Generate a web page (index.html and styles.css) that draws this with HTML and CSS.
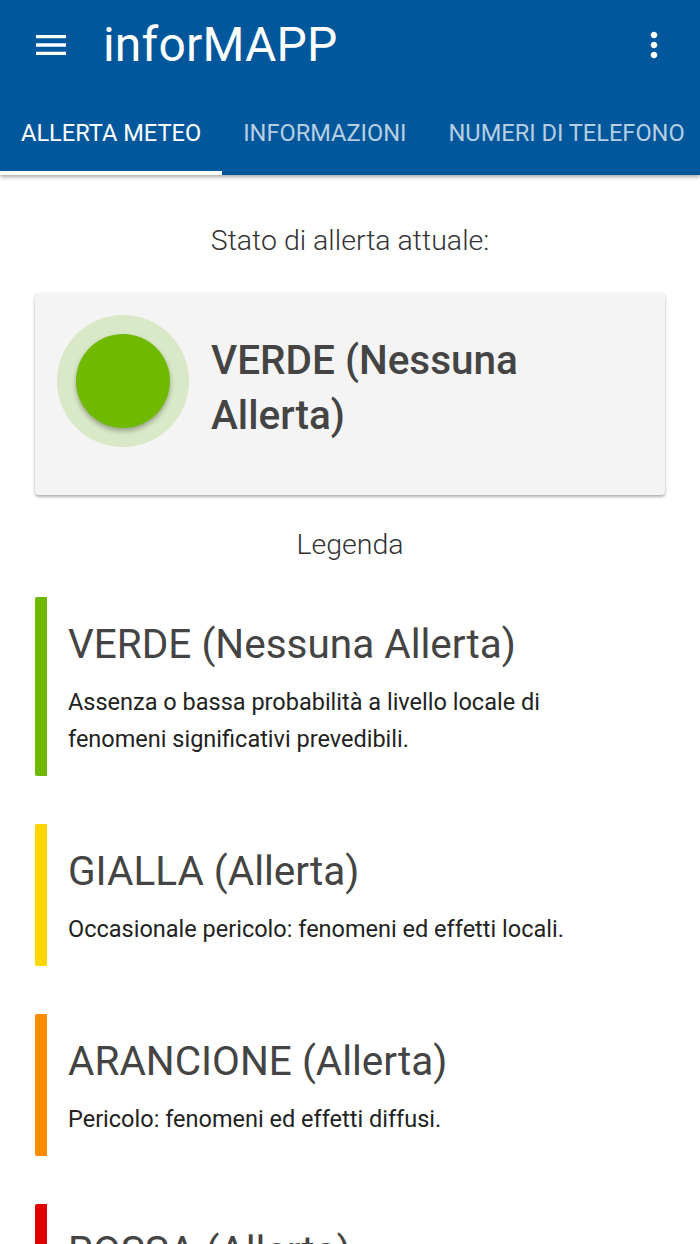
FILE: index.html
```html
<!DOCTYPE html>
<html lang="it">
<head>
<meta charset="utf-8">
<title>inforMAPP</title>
<link rel="stylesheet" href="styles.css">
</head>
<body>
<header class="appbar">
  <div class="toolbar">
    <svg class="icon menu" viewBox="0 0 24 24" width="40" height="40"><path fill="#fff" d="M3 18h18v-2H3v2zm0-5h18v-2H3v2zm0-7v2h18V6H3z"/></svg>
    <div class="title">inforMAPP</div>
    <svg class="icon more" viewBox="0 0 24 24" width="40" height="40"><path fill="#fff" d="M12 8c1.1 0 2-.9 2-2s-.9-2-2-2-2 .9-2 2 .9 2 2 2zm0 2c-1.1 0-2 .9-2 2s.9 2 2 2 2-.9 2-2-.9-2-2-2zm0 6c-1.1 0-2 .9-2 2s.9 2 2 2 2-.9 2-2-.9-2-2-2z"/></svg>
  </div>
  <nav class="tabs">
    <div class="tab active">ALLERTA METEO</div>
    <div class="tab">INFORMAZIONI</div>
    <div class="tab">NUMERI DI TELEFONO</div>
  </nav>
</header>
<main class="content">
  <p class="caption">Stato di allerta attuale:</p>
  <section class="card">
    <div class="halo"><div class="dot"></div></div>
    <div class="status">VERDE (Nessuna Allerta)</div>
  </section>
  <p class="caption legend-title">Legenda</p>
  <div class="legend">
    <div class="item green">
      <div class="item-title">VERDE (Nessuna Allerta)</div>
      <div class="item-desc">Assenza o bassa probabilità a livello locale di fenomeni significativi prevedibili.</div>
    </div>
    <div class="item yellow">
      <div class="item-title">GIALLA (Allerta)</div>
      <div class="item-desc">Occasionale pericolo: fenomeni ed effetti locali.</div>
    </div>
    <div class="item orange">
      <div class="item-title">ARANCIONE (Allerta)</div>
      <div class="item-desc">Pericolo: fenomeni ed effetti diffusi.</div>
    </div>
    <div class="item red">
      <div class="item-title">ROSSA (Allerta)</div>
      <div class="item-desc">Grave pericolo: fenomeni ed effetti estesi.</div>
    </div>
  </div>
</main>
</body>
</html>
```
FILE: styles.css
```css
* { box-sizing: border-box; }
html, body { margin: 0; padding: 0; }
body {
  font-family: Roboto, "Noto Sans", "Liberation Sans", sans-serif;
  background: #fff;
  width: 700px;
  overflow-x: hidden;
}
.appbar {
  background: #01579b;
  color: #fff;
  position: relative;
  z-index: 2;
  box-shadow: 0 2px 4px rgba(0,0,0,0.35);
}
.toolbar {
  height: 90px;
  display: flex;
  align-items: center;
  padding-left: 31px;
  padding-right: 26px;
}
.icon { display: block; flex: none; }
.title {
  font-size: 48px;
  line-height: 56px;
  margin-left: 32px;
  flex: 1;
  letter-spacing: 0.2px;
}
.tabs {
  display: flex;
  height: 85px;
  white-space: nowrap;
  overflow: hidden;
}
.tab {
  padding: 0 21px;
  display: flex;
  align-items: center;
  font-size: 23.6px;
  color: rgba(255,255,255,0.72);
  flex: none;
}
.tab.active {
  color: #fff;
  box-shadow: inset 0 -4px 0 #fff;
}
.content {
  padding: 0 35px;
}
.caption {
  margin: 0;
  text-align: center;
  font-size: 28.5px;
  line-height: 32px;
  color: #333;
  font-weight: 300;
}
.content > .caption:first-child { padding-top: 50px; }
.card {
  margin-top: 36px;
  background: #f4f4f4;
  border-radius: 4px;
  box-shadow: 0 2px 3px rgba(0,0,0,0.3), 0 0 2px rgba(0,0,0,0.08);
  padding: 22px 22px 48px 22px;
  display: flex;
  align-items: center;
  height: 202px;
}
.halo {
  width: 132px;
  height: 132px;
  border-radius: 50%;
  background: #d9e8c6;
  display: flex;
  align-items: center;
  justify-content: center;
  flex: none;
}
.dot {
  width: 94px;
  height: 94px;
  border-radius: 50%;
  background: #6fba00;
  box-shadow: 0 3px 5px rgba(0,0,0,0.3);
}
.status {
  margin-left: 22px;
  width: 400px;
  font-size: 40.5px;
  line-height: 55px;
  font-weight: 500;
  color: #444;
  margin-top: 13px;
}
.legend-title { margin-top: 34px; }
.legend {
  margin-top: 36px;
  display: flex;
  flex-direction: column;
  gap: 48px;
}
.item {
  border-left: 12px solid #6fba00;
  border-radius: 2px;
  padding: 23px 20px 18px 21px;
}
.item.yellow { border-left-color: #ffd600; }
.item.orange { border-left-color: #ff8c00; }
.item.red { border-left-color: #e00000; }
.item-title {
  font-size: 40.5px;
  line-height: 48px;
  color: #444;
}
.item-desc {
  margin-top: 16px;
  font-size: 23.5px;
  line-height: 37px;
  color: #222;
  max-width: 500px;
}
```
